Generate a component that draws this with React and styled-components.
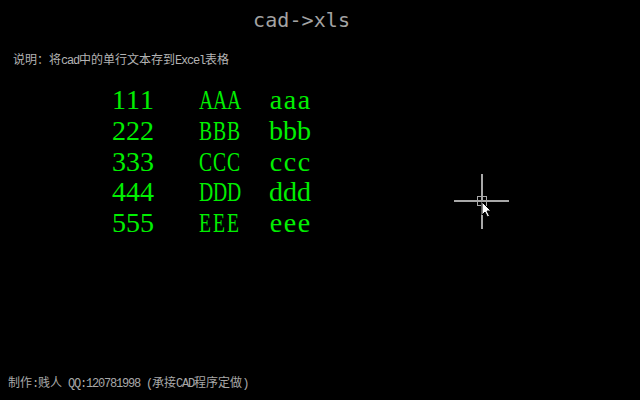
import React from "react";
import styled, { createGlobalStyle } from "styled-components";

const Global = createGlobalStyle`
  html, body { margin: 0; padding: 0; background: #000; }
  #root { width: 640px; height: 400px; }
`;

const Screen = styled.div`
  position: relative;
  width: 640px;
  height: 400px;
  background: #000;
  display: flex;
  flex-direction: column;
  overflow: hidden;
`;

const Title = styled.h1`
  margin: 0;
  padding: 7px 0 0 253px;
  font: 400 20px/26px "DejaVu Sans Mono", "Liberation Mono", monospace;
  color: #a3a3a3;
  letter-spacing: 0.1px;
`;

const Note = styled.p`
  margin: 0;
  padding: 20px 0 0 13px;
  font: 400 12px/16px "Liberation Mono", "Noto Sans CJK SC", monospace;
  color: #b4b4b4;
`;

const Latin = styled.span`
  letter-spacing: -1.2px;
`;

const Table = styled.div`
  display: grid;
  grid-template-columns: 85px 72px auto;
  margin: 16px 0 0 112px;
  font: 400 28px/30.8px "Liberation Serif", serif;
  color: #00f000;
`;

const Cell = styled.div`
  display: flex;
  white-space: nowrap;
`;

const Glyph = styled.span`
  display: inline-block;
  width: 14px;
  text-align: center;
  transform: scaleX(${(p) => p.$squeeze});
`;

const Footer = styled.footer`
  margin-top: auto;
  padding: 0 0 8px 8px;
  font: 400 12px/16px "Liberation Mono", "Noto Sans CJK SC", monospace;
  color: #a8a8a8;
`;

const Cursor = styled.svg`
  position: absolute;
  left: 450px;
  top: 170px;
`;

const rows = [
  ["111", "AAA", "aaa"],
  ["222", "BBB", "bbb"],
  ["333", "CCC", "ccc"],
  ["444", "DDD", "ddd"],
  ["555", "EEE", "eee"],
];

function Word({ text, squeeze }) {
  return (
    <Cell>
      {text.split("").map((ch, i) => (
        <Glyph key={i} $squeeze={squeeze}>
          {ch}
        </Glyph>
      ))}
    </Cell>
  );
}

export default function App() {
  return (
    <Screen>
      <Global />
      <Title>cad-&gt;xls</Title>
      <Note>
        说明：将<Latin>cad</Latin>中的单行文本存到<Latin>Excel</Latin>表格
      </Note>
      <Table>
        {rows.map((r) => (
          <React.Fragment key={r[0]}>
            <Word text={r[0]} squeeze={1} />
            <Word text={r[1]} squeeze={0.7} />
            <Word text={r[2]} squeeze={1} />
          </React.Fragment>
        ))}
      </Table>
      <Footer>
        制作<Latin>:</Latin>贱人<Latin> QQ:120781998 (</Latin>承接<Latin>CAD</Latin>程序定做<Latin>)</Latin>
      </Footer>
      <Cursor width="64" height="64" viewBox="0 0 64 64">
        <g stroke="#a8a8a8" strokeWidth="1.2" fill="none" shapeRendering="crispEdges">
          <line x1="32" y1="4" x2="32" y2="59" />
          <line x1="4" y1="31" x2="59" y2="31" />
          <rect x="27.5" y="26.5" width="9" height="9" />
        </g>
        <path
          d="M32 32 L32 45 L35 42 L37.5 47 L39.5 46 L37 41 L41 41 Z"
          fill="#fff"
          stroke="#000"
          strokeWidth="1"
        />
      </Cursor>
    </Screen>
  );
}
